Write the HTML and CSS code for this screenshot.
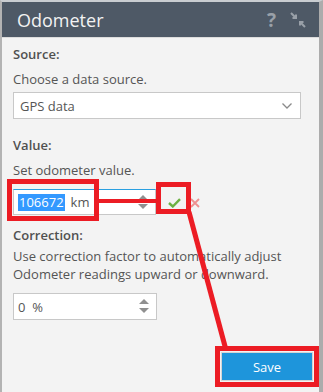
FILE: index.html
```html
<!DOCTYPE html>
<html lang="en">

<head>
    <meta charset="UTF-8">
    <title>Odometer</title>
    <link rel="stylesheet" href="styles.css">
</head>

<body>
    <div class="panel">
        <div class="panel-header">
            <span class="panel-title">Odometer</span>
            <span class="help">?</span>
            <svg class="collapse" width="16" height="16" viewBox="0 0 16 16">
                <path d="M1 1 L6 6 M6 2.5 V6 H2.5" stroke="#99a0a8" stroke-width="2" fill="none" />
                <path d="M15 15 L10 10 M10 13.5 V10 H13.5" stroke="#99a0a8" stroke-width="2" fill="none" />
            </svg>
        </div>

        <div class="panel-body">
            <div class="label">Source:</div>
            <div class="desc">Choose a data source.</div>
            <div class="select">
                <span>GPS data</span>
                <svg class="chevron" width="10" height="6" viewBox="0 0 10 6">
                    <path d="M0.5 0.5 L5 5 L9.5 0.5" stroke="#8a8a8a" stroke-width="1.3" fill="none" />
                </svg>
            </div>

            <div class="label label-value">Value:</div>
            <div class="desc">Set odometer value.</div>
            <div class="value-row">
                <div class="spin-input focused">
                    <span class="selected">106672</span>
                    <span class="unit">km</span>
                    <span class="spinner"><i class="up"></i><i class="down"></i></span>
                </div>
                <svg class="ok" width="13" height="10" viewBox="0 0 13 10">
                    <path d="M1 5 L4.8 8.5 L12 1.2" stroke="#6cb143" stroke-width="2.4" fill="none" />
                </svg>
                <svg class="cancel" width="10" height="10" viewBox="0 0 10 10">
                    <path d="M1 1 L9 9 M9 1 L1 9" stroke="#ee8f8f" stroke-width="1.8" fill="none" />
                </svg>
            </div>

            <div class="label label-correction">Correction:</div>
            <div class="desc desc-lines">Use correction factor to automatically adjust Odometer readings upward or downward.</div>
            <div class="spin-input correction">
                <span>0&nbsp;&nbsp;%</span>
                <span class="spinner"><i class="up"></i><i class="down"></i></span>
            </div>

            <div class="footer">
                <button class="btn-save">Save</button>
            </div>
        </div>

        <!-- annotation marks -->
        <svg class="marks" width="323" height="392" viewBox="0 0 323 392">
            <rect x="9.5" y="181.5" width="87" height="37" fill="none" stroke="#ec1c24" stroke-width="5" />
            <rect x="158.5" y="184.5" width="30" height="27" fill="none" stroke="#ec1c24" stroke-width="5" />
            <rect x="99" y="199" width="57" height="4" fill="#ec1c24" />
            <line x1="189" y1="212" x2="226" y2="350" stroke="#ec1c24" stroke-width="5" />
            <rect x="217.5" y="348.5" width="99" height="36" fill="none" stroke="#ec1c24" stroke-width="5" />
        </svg>
    </div>
</body>

</html>
```

FILE: styles.css
```css
body {
    margin: 0;
    font-family: "Open Sans", "DejaVu Sans", sans-serif;
    background: #f3f3f3;
}

.panel {
    position: relative;
    width: 323px;
    height: 392px;
    box-sizing: border-box;
    border-top: 2px solid #c9cdd1;
    border-left: 2px solid #b3b3b3;
    border-right: 4px solid #acacac;
    background: #f3f3f3;
    overflow: hidden;
}

.panel-header {
    display: flex;
    align-items: center;
    height: 35px;
    background: #4e5966;
    padding: 0 13px 0 15px;
    border-bottom: 1px solid #dcdcdc;
}

.panel-title {
    flex: 1;
    color: #f2f2f2;
    font-size: 18px;
}

.help {
    color: #99a0a8;
    font-size: 19px;
    font-weight: bold;
    margin-right: 14px;
}

.panel-body {
    padding: 6px 0 0 11px;
    color: #555;
    font-size: 13px;
}

.label {
    font-weight: 600;
    line-height: 20px;
    color: #505050;
}

.desc {
    line-height: 20px;
    margin-top: 5px;
}

.select {
    display: flex;
    align-items: center;
    justify-content: space-between;
    width: 288px;
    height: 27px;
    box-sizing: border-box;
    margin-top: 3px;
    padding: 0 8px 0 6px;
    background: #fff;
    border: 1px solid #c8c8c8;
}

.label-value {
    margin-top: 16px;
}

.value-row {
    display: flex;
    align-items: center;
    margin-top: 9px;
}

.spin-input {
    position: relative;
    display: flex;
    align-items: center;
    width: 143px;
    height: 26px;
    box-sizing: border-box;
    padding-left: 4px;
    background: #fff;
    border: 1px solid #c8c8c8;
}

.spin-input.focused {
    border-top-color: #2a9fe0;
}

.selected {
    background: #3399ff;
    color: #fff;
    line-height: 17px;
    padding: 0 1px;
}

.unit {
    margin-left: 6px;
}

.spinner {
    position: absolute;
    right: 7px;
    top: 5px;
    display: flex;
    flex-direction: column;
    gap: 4px;
}

.spinner i {
    display: block;
    width: 0;
    height: 0;
    border-left: 5px solid transparent;
    border-right: 5px solid transparent;
}

.spinner .up {
    border-bottom: 5px solid #909090;
}

.spinner .down {
    border-top: 5px solid #909090;
}

.ok {
    margin-left: 12px;
    margin-top: 2px;
}

.cancel {
    margin-left: 9px;
    margin-top: 2px;
}

.label-correction {
    margin-top: 10px;
}

.desc-lines {
    line-height: 18px;
    margin-top: 2px;
    width: 300px;
}

.correction {
    width: 144px;
    height: 27px;
    margin-top: 10px;
}

.footer {
    display: flex;
    justify-content: flex-end;
    margin-top: 32px;
    padding-right: 6px;
}

.btn-save {
    width: 92px;
    height: 29px;
    background: #1e95db;
    color: #fff;
    border: 1px solid #d4d4d4;
    font-family: "Open Sans", "DejaVu Sans", sans-serif;
    font-size: 13px;
}

.marks {
    position: absolute;
    top: -2px;
    left: -2px;
    pointer-events: none;
}
```
